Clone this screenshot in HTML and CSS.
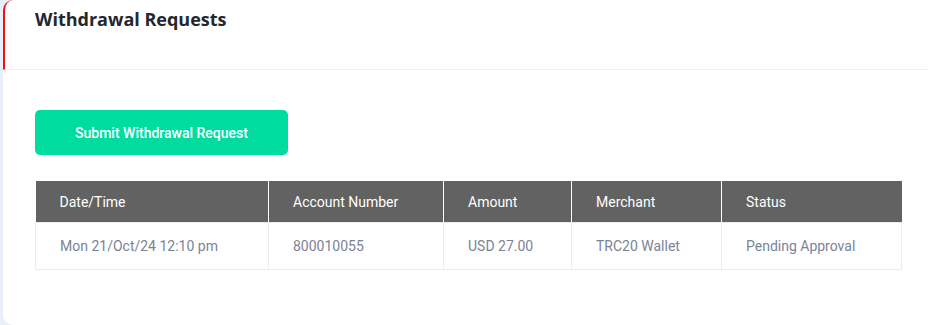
FILE: index.html
```html
<!DOCTYPE html>
<html lang="en">

<head>
  <meta charset="UTF-8" />
  <meta name="viewport" content="width=device-width, initial-scale=1.0" />
  <title>Withdrawal Requests</title>
  <link rel="stylesheet" href="styles.css">
</head>

<body>

  <!-- Withdrawal card -->
  <div class="card">
    <div class="card-header">
      <h3>Withdrawal Requests</h3>
    </div>

    <div class="card-body">
      <button type="button" class="btn-submit">Submit Withdrawal Request</button>

      <table class="requests">
        <colgroup>
          <col class="c-date">
          <col class="c-account">
          <col class="c-amount">
          <col class="c-merchant">
          <col class="c-status">
        </colgroup>
        <thead>
          <tr>
            <th>Date/Time</th>
            <th>Account Number</th>
            <th>Amount</th>
            <th>Merchant</th>
            <th>Status</th>
          </tr>
        </thead>
        <tbody>
          <tr>
            <td>Mon 21/Oct/24 12:10 pm</td>
            <td>800010055</td>
            <td>USD 27.00</td>
            <td>TRC20 Wallet</td>
            <td>Pending Approval</td>
          </tr>
        </tbody>
      </table>
    </div>
  </div>

</body>

</html>
```

FILE: styles.css
```css
html,
body {
  height: 100%;
}

body {
  font-family: Roboto, 'Noto Sans', sans-serif;
  margin: 0;
  padding: 0;
  background: #e9eef7;
  overflow: hidden;
}

.card {
  margin-left: 3px;
  height: 325px;
  background: #fff;
  border-radius: 10px 0 0 10px;
  box-sizing: border-box;
}

.card-header {
  height: 70px;
  border-left: 2px solid #ee1111;
  border-bottom: 1px solid #eceef2;
  border-top-left-radius: 10px;
  padding: 8px 0 0 30px;
  box-sizing: border-box;
}

.card-header h3 {
  margin: 0;
  font-family: 'Open Sans', sans-serif;
  font-size: 18px;
  font-weight: 700;
  color: #23272e;
  line-height: 22px;
}

.card-body {
  padding: 40px 27px 0 32px;
}

.btn-submit {
  display: block;
  width: 253px;
  height: 45px;
  padding: 0;
  background-color: #00dca0;
  color: #fff;
  border: none;
  border-radius: 5px;
  font-family: Roboto, sans-serif;
  font-size: 14px;
  font-weight: 500;
  cursor: pointer;
}

.requests {
  margin-top: 26px;
  width: 866px;
  table-layout: fixed;
  border-collapse: collapse;
  font-size: 14px;
}

.c-date { width: 233px; }
.c-account { width: 175px; }
.c-amount { width: 128px; }
.c-merchant { width: 150px; }
.c-status { width: 180px; }

.requests th {
  background: #626262;
  color: #fff;
  font-weight: 400;
  text-align: left;
  height: 41px;
  padding: 0 0 0 24px;
  border-left: 1px solid #fff;
}

.requests th:first-child {
  border-left: none;
}

.requests td {
  color: #7b8397;
  height: 46px;
  padding: 0 0 0 24px;
  border: 1px solid #e9ecf1;
}
```
